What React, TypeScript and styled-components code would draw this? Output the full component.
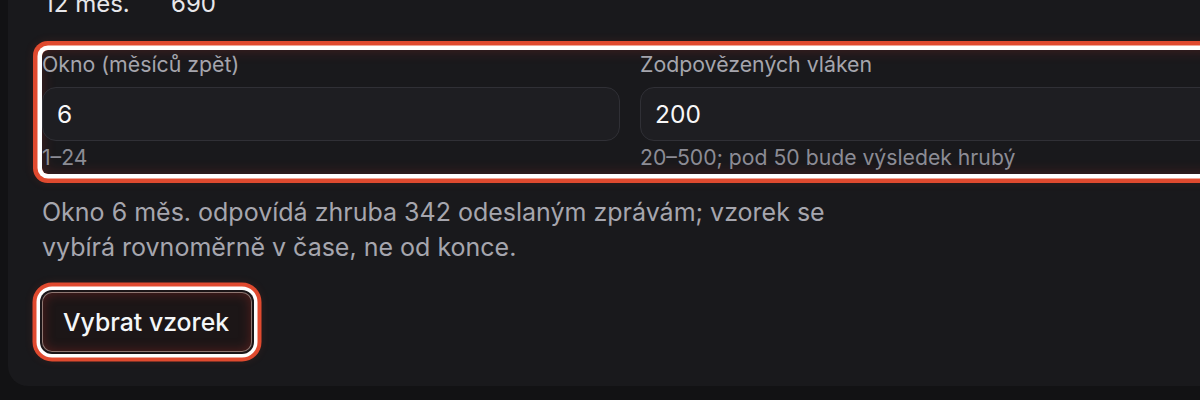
import React from 'react';
import styled, { createGlobalStyle } from 'styled-components';

const GlobalStyle = createGlobalStyle`
  html, body {
    margin: 0;
    background: #121214;
    overflow: hidden;
    font-family: Inter, "Noto Sans", sans-serif;
    -webkit-font-smoothing: antialiased;
  }
`;

const Page = styled.div`
  padding-left: 8px;
  margin-top: -11px;
`;

const Panel = styled.div`
  width: 1244px;
  box-sizing: border-box;
  background: #19191c;
  border-radius: 0 0 20px 20px;
  padding: 0 34px 34px;
`;

const StatRow = styled.div`
  display: grid;
  grid-template-columns: 127px auto;
  font-size: 24px;
  line-height: 30px;
  color: #e7e7ea;
  padding-left: 2px;
`;

const FieldGrid = styled.div`
  display: grid;
  grid-template-columns: 1fr 1fr;
  column-gap: 20px;
  margin-top: 31px;
  padding-bottom: 4px;
  border-radius: 6px;
  box-shadow:
    0 0 0 4.5px #ffffff,
    0 0 0 9px #e04a2f,
    0 0 10px 9px rgba(224, 74, 47, 0.12),
    inset 0 0 14px rgba(190, 50, 40, 0.28);
`;

const Field = styled.div`
  display: flex;
  flex-direction: column;
`;

const Label = styled.label`
  font-size: 21.3px;
  line-height: 28px;
  color: #a5a5ad;
  margin-bottom: 9px;
`;

const Input = styled.div`
  height: 54px;
  box-sizing: border-box;
  display: flex;
  align-items: center;
  padding: 0 14px;
  background: #1e1e22;
  border: 1px solid #303036;
  border-radius: 14px;
  font-size: 24.5px;
  color: #f7f7f8;
`;

const Hint = styled.div`
  font-size: 21.2px;
  line-height: 26px;
  margin-top: 3px;
  color: #8c8c95;
`;

const Note = styled.p`
  margin: 21px 0 0;
  max-width: 820px;
  font-size: 25px;
  line-height: 35px;
  color: #a6a6ae;
`;

const Button = styled.button`
  margin-top: 27px;
  height: 60px;
  padding: 0 22px 0 20px;
  font-family: inherit;
  font-size: 24.8px;
  font-weight: 500;
  color: #f4f6f8;
  background: #1c1617;
  border: 1px solid rgba(255, 215, 205, 0.5);
  border-radius: 10px;
  box-shadow:
    0 0 0 2px #1b1517,
    0 0 0 5.5px #ffffff,
    0 0 0 9.5px #e04a2f,
    0 0 10px 9px rgba(224, 74, 47, 0.12),
    inset 0 0 12px rgba(190, 50, 40, 0.35);
`;

interface FieldData {
  label: string;
  value: string;
  hint: string;
}

const fields: FieldData[] = [
  { label: 'Okno (měsíců zpět)', value: '6', hint: '1–24' },
  { label: 'Zodpovězených vláken', value: '200', hint: '20–500; pod 50 bude výsledek hrubý' },
];

const App: React.FC = () => {
  return (
    <>
      <GlobalStyle />
      <Page>
        <Panel>
          <StatRow>
            <span>12 měs.</span>
            <span>690</span>
          </StatRow>
          <FieldGrid>
            {fields.map((f) => (
              <Field key={f.label}>
                <Label>{f.label}</Label>
                <Input>{f.value}</Input>
                <Hint>{f.hint}</Hint>
              </Field>
            ))}
          </FieldGrid>
          <Note>
            Okno 6 měs. odpovídá zhruba 342 odeslaným zprávám; vzorek se vybírá rovnoměrně v čase, ne od
            konce.
          </Note>
          <Button>Vybrat vzorek</Button>
        </Panel>
      </Page>
    </>
  );
};

export default App;
